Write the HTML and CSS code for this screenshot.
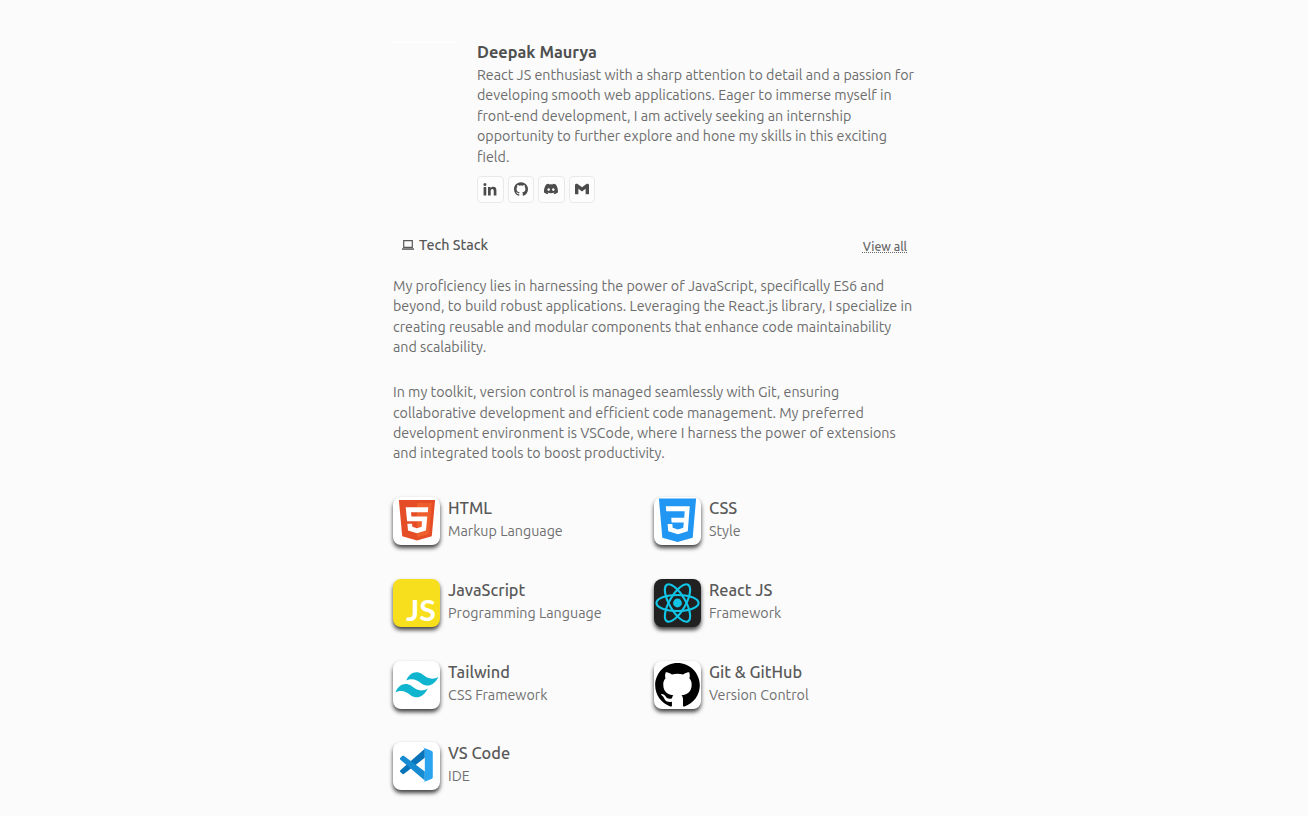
FILE: index.html
```html
<!DOCTYPE html>
<html lang="en">
<head>
<meta charset="utf-8">
<title>Deepak Maurya</title>
<link rel="stylesheet" href="styles.css">
</head>
<body>
<main class="page">
  <header class="profile">
    <div class="avatar"></div>
    <div class="bio">
      <h1 class="name">Deepak Maurya</h1>
      <p class="copy">React JS enthusiast with a sharp attention to detail and a passion for<br>developing smooth web applications. Eager to immerse myself in<br>front-end development, I am actively seeking an internship<br>opportunity to further explore and hone my skills in this exciting<br>field.</p>
      <nav class="socials">
        <a class="social"><svg width="14" height="14" viewBox="0 0 24 24"><path d="M1 8.5h4.6V23H1zM3.3 1.5a2.6 2.6 0 1 1 0 5.2 2.6 2.6 0 0 1 0-5.2M8.6 8.5H13v2c.8-1.4 2.4-2.4 4.5-2.4 4.4 0 5.5 2.8 5.5 6.8V23h-4.6v-7.2c0-1.9-.3-3.7-2.4-3.7-2.2 0-2.8 1.700-2.8 3.7V23H8.6z"/></svg></a>
        <a class="social"><svg width="14" height="14" viewBox="0 0 24 24"><use href="#octocat"/></svg></a>
        <a class="social"><svg width="14" height="14" viewBox="0 0 24 24"><path fill-rule="evenodd" d="M20.3 4.4a19.8 19.8 0 0 0-4.9-1.5l-.7 1.3a18 18 0 0 0-5.5 0l-.7-1.3a19.7 19.7 0 0 0-4.9 1.5C.5 9-.3 13.600.1 18.100a20 20 0 0 0 6 3l1.300-2-1.900-1 .4-.3c3.900 1.800 8.200 1.800 12.100 0l.4.3-1.900 1 1.300 2a20 20 0 0 0 6-3c.5-5.200-.8-9.700-3.500-13.700M8 15.300c-1.200 0-2.200-1.100-2.200-2.400S6.800 10.500 8 10.500s2.200 1.100 2.200 2.400-1 2.400-2.200 2.400m8 0c-1.200 0-2.200-1.100-2.200-2.400s1-2.400 2.200-2.400 2.200 1.100 2.200 2.400-1 2.400-2.200 2.400"/></svg></a>
        <a class="social"><svg width="14" height="14" viewBox="0 0 24 24"><path d="M0 5.500C0 3 2.700 2.200 4.500 3.500L12 9.200l7.500-5.700C21.300 2.200 24 3 24 5.500v14c0 .9-.6 1.500-1.500 1.500h-4.300V11.500L12 16.200l-6.200-4.700V21H1.500C.6 21 0 20.400 0 19.500z"/></svg></a>
      </nav>
    </div>
  </header>

  <div class="section-head">
    <h2 class="section-title"><svg width="12" height="12" viewBox="0 0 12 12"><path fill="none" stroke="currentColor" stroke-width="1.200" d="M1.700 1.600h8.600v6.800H1.700z"/><path d="M0 9.300h12v1.500H0z"/></svg><span>Tech Stack</span></h2>
    <a class="view-all">View all</a>
  </div>

  <p class="copy intro">My proficiency lies in harnessing the power of JavaScript, specifically ES6 and<br>beyond, to build robust applications. Leveraging the React.js library, I specialize in<br>creating reusable and modular components that enhance code maintainability<br>and scalability.</p>
  <p class="copy toolkit">In my toolkit, version control is managed seamlessly with Git, ensuring<br>collaborative development and efficient code management. My preferred<br>development environment is VSCode, where I harness the power of extensions<br>and integrated tools to boost productivity.</p>

  <section class="stack">
    <article class="tech">
      <div class="tile"><svg width="47" height="48" viewBox="0 0 48 48"><path fill="#e44d26" d="M6 2.500h37l-3.400 37L24.500 44 9.400 39.500z"/><path fill="#ee5f2c" d="M24.500 5.500h15.200l-2.900 31.800-12.300 3.500z"/><path fill="#fff" d="M13 10h23l-.4 5H18.400l.4 4.300h16.200l-1.300 14.400-9.200 2.800-9.200-2.800-.6-6.900h4.800l.3 3.200 4.700 1.300 4.700-1.300.4-5.700H14.400z"/></svg></div>
      <div><h3 class="tech-name">HTML</h3><p class="tech-kind">Markup Language</p></div>
    </article>
    <article class="tech">
      <div class="tile"><svg width="47" height="48" viewBox="0 0 48 48"><path fill="#2196f3" d="M5 1h38l-3.500 40L24 45.500 8.500 41z"/><path fill="#fff" d="M12 9h24.500l-2 25.500-10 3-10-3-.6-7.500h4.800l.4 4 5.400 1.600 5.400-1.600.5-5.500H18l-.4-4.700h13.300l.4-6.800H12.500z"/></svg></div>
      <div><h3 class="tech-name">CSS</h3><p class="tech-kind">Style</p></div>
    </article>
    <article class="tech">
      <div class="tile yellow"><svg width="47" height="48" viewBox="0 0 48 48"><text class="js-mark" x="13.500" y="42.500" textLength="30.500" lengthAdjust="spacingAndGlyphs">JS</text></svg></div>
      <div><h3 class="tech-name">JavaScript</h3><p class="tech-kind">Programming Language</p></div>
    </article>
    <article class="tech">
      <div class="tile dark"><svg width="47" height="48" viewBox="0 0 48 48"><g fill="none" stroke="#12c5e6" stroke-width="2.200"><ellipse cx="24" cy="24" rx="21.500" ry="8.200"/><ellipse cx="24" cy="24" rx="21.500" ry="8.200" transform="rotate(60 24 24)"/><ellipse cx="24" cy="24" rx="21.500" ry="8.200" transform="rotate(120 24 24)"/></g><circle cx="24" cy="24" r="4.500" fill="#12c5e6"/></svg></div>
      <div><h3 class="tech-name">React JS</h3><p class="tech-kind">Framework</p></div>
    </article>
    <article class="tech">
      <div class="tile"><svg width="47" height="48" viewBox="0 0 48 48"><g fill="#0fb5cf"><path d="M13.500 19.500C16.500 12 23 8.500 30 13c5 4 10 6.500 16.500 2.500C42.500 24 35.500 27 29 22.500c-4.500-3.500-9-6-15.500-3"/><path d="M2.500 31.500C5.500 24 12 20.500 19 25c5 4 10 6.500 16.500 2.500C31.500 36 24.500 39 18 34.500c-4.500-3.500-9-6-15.500-3"/></g></svg></div>
      <div><h3 class="tech-name">Tailwind</h3><p class="tech-kind">CSS Framework</p></div>
    </article>
    <article class="tech">
      <div class="tile"><svg width="47" height="48" viewBox="0 0 48 48"><g transform="translate(1.200 1) scale(1.900)"><path id="octocat" d="M12 .297c-6.630 0-12 5.373-12 12 0 5.303 3.438 9.800 8.205 11.385.6.113.82-.258.82-.577 0-.285-.01-1.040-.015-2.040-3.338.724-4.042-1.610-4.042-1.610C4.422 18.070 3.633 17.700 3.633 17.700c-1.087-.744.084-.729.084-.729 1.205.084 1.838 1.236 1.838 1.236 1.070 1.835 2.809 1.305 3.495.998.108-.776.417-1.305.76-1.605-2.665-.3-5.466-1.332-5.466-5.930 0-1.310.465-2.380 1.235-3.220-.135-.303-.54-1.523.105-3.176 0 0 1.005-.322 3.300 1.230.96-.267 1.980-.399 3-.405 1.020.006 2.040.138 3 .405 2.280-1.552 3.285-1.230 3.285-1.230.645 1.653.24 2.873.12 3.176.765.84 1.230 1.910 1.230 3.220 0 4.610-2.805 5.625-5.475 5.920.42.36.81 1.096.81 2.220 0 1.606-.015 2.896-.015 3.286 0 .315.21.69.825.57C20.565 22.092 24 17.592 24 12.297c0-6.627-5.373-12-12-12"/></g></svg></div>
      <div><h3 class="tech-name">Git &amp; GitHub</h3><p class="tech-kind">Version Control</p></div>
    </article>
    <article class="tech">
      <div class="tile"><svg width="47" height="48" viewBox="0 0 48 48"><g transform="translate(.8 .8) scale(.96 .93)"><path fill="#0873b8" d="M33 6v10L11 33.500c-.7.5-1.500.5-2 0l-2-2c-.6-.6-.6-1.500 0-2z"/><path fill="#168bd2" d="M33 41V31L11 14c-.7-.5-1.500-.5-2 0l-2 2c-.6.600-.6 1.500 0 2z"/><path fill="#2aa4ee" d="M32 5l8 3.300c1 .5 1.500 1.200 1.500 2.200v26.500c0 1-.5 1.700-1.500 2.200L32 42.500c-.8.4-1.500.2-2-.5 1.500 1 3 .2 3-1.500V7c0-1.700-1.500-2.500-3-1.500.5-.7 1.200-.9 2-.5"/></g></svg></div>
      <div><h3 class="tech-name">VS Code</h3><p class="tech-kind">IDE</p></div>
    </article>
  </section>
</main>
</body>
</html>
```
FILE: styles.css
```css
* { box-sizing: border-box; }
body {
  margin: 0;
  height: 816px;
  overflow: hidden;
  background: #fbfbfb;
  color: #595959;
  font-family: Ubuntu, "Noto Sans", sans-serif;
}
h1, h2, h3, p { margin: 0; }
svg { display: block; fill: currentColor; }
.page { width: 522px; margin: 0 auto; padding-top: 42px; }
.profile { display: flex; }
.avatar { width: 66px; height: 1px; margin-right: 18px; background: #fff; }
.name { margin-bottom: 2.400px; font-size: 16.330px; line-height: 20.600px; font-weight: 600; color: #505050; }
.copy { font-size: 14.290px; line-height: 20.410px; color: #6d6d6d; white-space: nowrap; }
.socials { display: flex; gap: 4px; margin-top: 8.500px; }
.social {
  display: grid;
  place-items: center;
  width: 26.600px;
  height: 27px;
  border: 1px solid #e9e9e9;
  border-radius: 4px;
  background: #fdfdfd;
  color: #4c4c4c;
}
.section-head { display: flex; justify-content: space-between; align-items: center; height: 24px; margin-top: 30.500px; padding: 0 8px 0 9px; }
.section-title { display: flex; align-items: center; gap: 5px; font-size: 14.290px; font-weight: 500; }
.view-all { padding-top: 2px; font-size: 12.250px; font-weight: 500; color: #686868; text-decoration: underline dotted; text-underline-offset: 1px; }
.intro { margin-top: 19px; }
.toolkit { margin-top: 24.500px; }
.stack { display: grid; grid-template-columns: 261px 261px; row-gap: 33.640px; margin-top: 33.500px; }
.tech { display: flex; gap: 8px; height: 48px; }
.tile { width: 47px; height: 48px; flex: none; border-radius: 8px; overflow: hidden; background: #fff; color: #000; box-shadow: 0 3px 4px rgba(0, 0, 0, .75); }
.tile.yellow { background: #f7df1e; }
.tile.dark { background: #212121; }
.js-mark { fill: #fff; font: 700 29px Lato, sans-serif; }
.tech-name { font-size: 16.330px; line-height: 23px; font-weight: 500; white-space: nowrap; }
.tech-kind { font-size: 14.290px; line-height: 22px; color: #707070; white-space: nowrap; }
```
